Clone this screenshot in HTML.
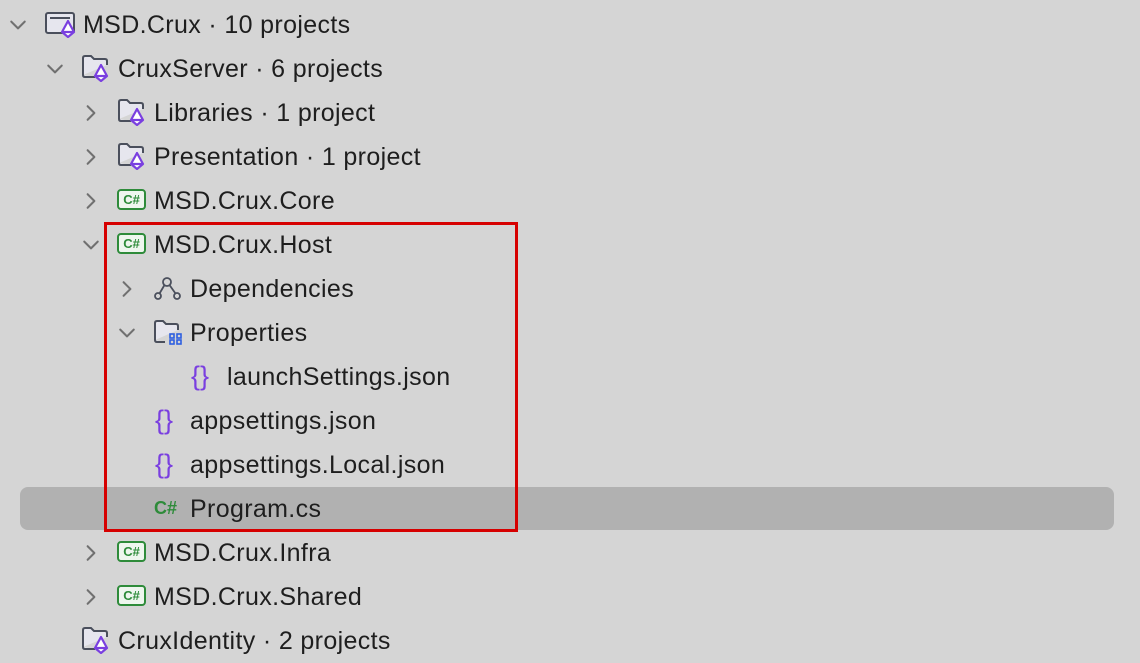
<!DOCTYPE html>
<html><head><meta charset="utf-8"><style>
html,body{margin:0;padding:0;width:1140px;height:632px;overflow:hidden;background:#d5d5d5;font-family:"Liberation Sans",sans-serif;}
.row{position:absolute;left:0;height:44px;width:1140px;}
.t{position:absolute;top:7px;font-size:25px;letter-spacing:0.35px;color:#1e1e1e;line-height:30px;white-space:nowrap;}
.ch{position:absolute;top:13px;}
.ic{position:absolute;top:9px;}
.sel{position:absolute;left:20px;top:487px;width:1094px;height:43px;background:#b1b1b1;border-radius:8px;}
.red{position:absolute;left:104px;top:222px;width:408px;height:304px;border:3px solid #d60000;}
.cs{position:absolute;top:10px;width:29px;height:21px;border:2px solid #2e8b3a;border-radius:4px;box-sizing:border-box;background:#eef6ee;color:#2e8b3a;font-size:13px;font-weight:bold;text-align:center;line-height:17px;}
.br{position:absolute;top:6px;color:#7a3fe0;font-size:27px;line-height:30px;}
</style></head><body>
<div class="sel"></div>
<svg width="0" height="0" style="position:absolute">
<defs>
<symbol id="chr" viewBox="0 0 16 16"><path d="M5 2 L11 8 L5 14" fill="none" stroke="#707070" stroke-width="1.8" stroke-linecap="round" stroke-linejoin="round"/></symbol>
<symbol id="chd" viewBox="0 0 16 16"><path d="M2 5 L8 11 L14 5" fill="none" stroke="#707070" stroke-width="1.8" stroke-linecap="round" stroke-linejoin="round"/></symbol>
<symbol id="fold" viewBox="0 0 30 28"><path d="M3 21 V4 Q3 2 5 2 H11 L14 5 H25 Q27 5 27 7 V11 M15 23 H5 Q3 23 3 21" fill="#e6e6ee" stroke="#4a4f5c" stroke-width="2"/><path d="M21 11 L15 22 L21 27 L27 22 Z M15 22 H27" fill="#fff" stroke="#7a3fe0" stroke-width="2.2" stroke-linejoin="round"/></symbol>
<symbol id="sln" viewBox="0 0 34 28"><rect x="2" y="3" width="28" height="20" rx="2" fill="#e6e6ee" stroke="#4a4f5c" stroke-width="2"/><path d="M6 8 H26" stroke="#4a4f5c" stroke-width="2"/><path d="M24 11 L18 22 L24 27 L30 22 Z M18 22 H30" fill="#fff" stroke="#7a3fe0" stroke-width="2.2" stroke-linejoin="round"/></symbol>
</defs></svg>

<div class="row" style="top:3px"><svg class="ch" style="left:9px" width="18" height="18"><use href="#chd"/></svg><svg class="ic" style="left:44px;top:7px" width="34" height="28"><use href="#sln"/></svg><div class="t" style="left:83px">MSD.Crux · 10 projects</div></div>
<div class="row" style="top:47px"><svg class="ch" style="left:46px" width="18" height="18"><use href="#chd"/></svg><svg class="ic" style="left:80px;top:7px" width="30" height="28"><use href="#fold"/></svg><div class="t" style="left:118px">CruxServer · 6 projects</div></div>
<div class="row" style="top:91px"><svg class="ch" style="left:82px" width="18" height="18"><use href="#chr"/></svg><svg class="ic" style="left:116px;top:7px" width="30" height="28"><use href="#fold"/></svg><div class="t" style="left:154px">Libraries · 1 project</div></div>
<div class="row" style="top:135px"><svg class="ch" style="left:82px" width="18" height="18"><use href="#chr"/></svg><svg class="ic" style="left:116px;top:7px" width="30" height="28"><use href="#fold"/></svg><div class="t" style="left:154px">Presentation · 1 project</div></div>
<div class="row" style="top:179px"><svg class="ch" style="left:82px" width="18" height="18"><use href="#chr"/></svg><div class="cs" style="left:117px">C#</div><div class="t" style="left:154px">MSD.Crux.Core</div></div>
<div class="row" style="top:223px"><svg class="ch" style="left:82px" width="18" height="18"><use href="#chd"/></svg><div class="cs" style="left:117px">C#</div><div class="t" style="left:154px">MSD.Crux.Host</div></div>
<div class="row" style="top:267px"><svg class="ch" style="left:118px" width="18" height="18"><use href="#chr"/></svg>
<svg class="ic" style="left:153px" width="30" height="26" viewBox="0 0 30 26"><g fill="none" stroke="#4a4f5c" stroke-width="1.8"><circle cx="14" cy="6" r="4"/><circle cx="5" cy="20" r="3"/><circle cx="24" cy="20" r="3"/><path d="M11.5 9 L6.5 17.5 M16.5 9 L22.5 17.5"/></g></svg>
<div class="t" style="left:190px">Dependencies</div></div>
<div class="row" style="top:311px"><svg class="ch" style="left:118px" width="18" height="18"><use href="#chd"/></svg>
<svg class="ic" style="left:153px;top:8px" width="32" height="28" viewBox="0 0 32 28"><path d="M2 21 V4 Q2 2 4 2 H10 L13 5 H23 Q25 5 25 7 V11 M12 23 H4 Q2 23 2 21" fill="#e6e6ee" stroke="#4a4f5c" stroke-width="2"/><g fill="none" stroke="#2e5fe0" stroke-width="1.6"><rect x="17" y="15" width="4" height="4"/><rect x="24" y="15" width="4" height="4"/><rect x="17" y="21" width="4" height="4"/><rect x="24" y="21" width="4" height="4"/></g></svg>
<div class="t" style="left:190px">Properties</div></div>
<div class="row" style="top:355px"><div class="br" style="left:191px">{}</div><div class="t" style="left:227px">launchSettings.json</div></div>
<div class="row" style="top:399px"><div class="br" style="left:155px">{}</div><div class="t" style="left:190px">appsettings.json</div></div>
<div class="row" style="top:443px"><div class="br" style="left:155px">{}</div><div class="t" style="left:190px">appsettings.Local.json</div></div>
<div class="row" style="top:487px"><div style="position:absolute;left:154px;top:11px;color:#2e8b3a;font-weight:bold;font-size:18px">C#</div><div class="t" style="left:190px">Program.cs</div></div>
<div class="row" style="top:531px"><svg class="ch" style="left:82px" width="18" height="18"><use href="#chr"/></svg><div class="cs" style="left:117px">C#</div><div class="t" style="left:154px">MSD.Crux.Infra</div></div>
<div class="row" style="top:575px"><svg class="ch" style="left:82px" width="18" height="18"><use href="#chr"/></svg><div class="cs" style="left:117px">C#</div><div class="t" style="left:154px">MSD.Crux.Shared</div></div>
<div class="row" style="top:619px"><svg class="ic" style="left:80px;top:7px" width="30" height="28"><use href="#fold"/></svg><div class="t" style="left:118px">CruxIdentity · 2 projects</div></div>
<div class="red"></div>
</body></html>
